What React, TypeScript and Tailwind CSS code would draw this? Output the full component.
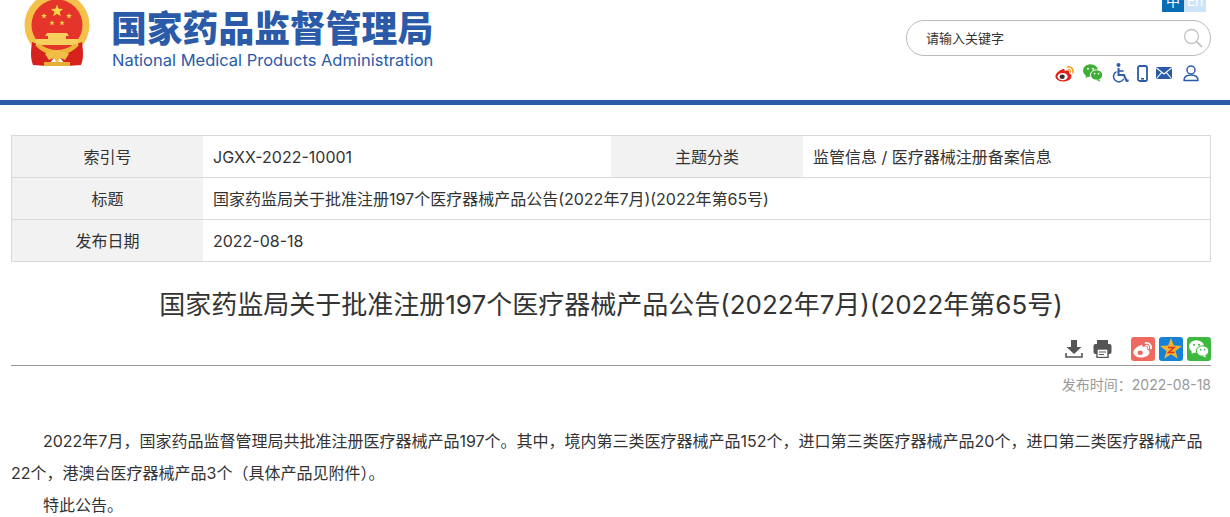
import React from "react";

const FONT = "font-['Inter','Noto_Sans_CJK_SC',sans-serif]";

function Star({ cx, cy, r, fill = "#f9d648" }: { cx: number; cy: number; r: number; fill?: string }) {
  const pts = Array.from({ length: 10 }, (_, i) => {
    const a = (-90 + i * 36) * (Math.PI / 180);
    const q = i % 2 === 0 ? r : r * 0.42;
    return `${(cx + q * Math.cos(a)).toFixed(2)},${(cy + q * Math.sin(a)).toFixed(2)}`;
  }).join(" ");
  return <polygon points={pts} fill={fill} />;
}

function Emblem() {
  return (
    <svg width="68" height="70" viewBox="0 0 68 70" className="block">
      <circle cx="34" cy="27" r="32.5" fill="#f4c24a" />
      <circle cx="34" cy="27" r="25.5" fill="#e5352b" />
      <path d="M9 44 C8 52 7 60 10 67 L24 68 L31 60 L24 50 Z" fill="#d7211c" />
      <path d="M59 44 C60 52 61 60 58 67 L44 68 L37 60 L44 50 Z" fill="#d7211c" />
      <Star cx={34} cy={13} r={6.5} />
      <Star cx={21} cy={18} r={3} />
      <Star cx={46} cy={18} r={3} />
      <Star cx={29} cy={25} r={2.8} />
      <Star cx={39} cy={25} r={2.8} />
      <path d="M24 35 L44 35 L46 38 L22 38 Z" fill="#f6d05e" />
      <rect x="25" y="38" width="18" height="3" fill="#f6d05e" />
      <rect x="13" y="41" width="42" height="6" fill="#f6d05e" />
      <path d="M12 47 C18 54 26 57 34 57 C42 57 50 54 56 47 L51 46 C46 50 40 52 34 52 C28 52 22 50 17 46 Z" fill="#eeb53a" />
      <path d="M22 56 C28 51 40 51 46 56 L42 62 L37 60 L34 66 L31 60 L26 62 Z" fill="#f0bd45" />
      <rect x="21" y="64" width="26" height="4" fill="#e9ae35" />
    </svg>
  );
}

function WeiboGlyph({ body = "#e2231a", arc = "#f5a623", eye = "#333" }: { body?: string; arc?: string; eye?: string }) {
  return (
    <svg width="20" height="17" viewBox="0 0 20 17" className="block">
      <path d="M8 4 C3.5 5.5 0 9 0.5 12 C1 15.3 5 16.5 8.5 16.5 C13 16.5 16.5 14 16.5 11.2 C16.5 9.6 15 8.9 14.2 8.6 C14.8 7 14.3 5.8 12.5 5.6 C11.4 5.5 10.2 6 9.6 6.3 C10 4.8 9.6 3.5 8 4 Z" fill={body} />
      <ellipse cx="7.6" cy="11.6" rx="5" ry="3.6" fill="#fff" />
      <ellipse cx="7.2" cy="11.8" rx="2.6" ry="2.2" fill={eye} />
      <path d="M12.5 2 C15.8 1.2 18.8 4 18 7.6" stroke={arc} strokeWidth="1.7" fill="none" strokeLinecap="round" />
      <path d="M13 4.6 C14.8 4.2 16 5.6 15.6 7.2" stroke={arc} strokeWidth="1.3" fill="none" strokeLinecap="round" />
    </svg>
  );
}

function WechatGlyph({ a = "#3fae35", b = "#3fae35", stroke = "#fff", eye = "#fff" }: { a?: string; b?: string; stroke?: string; eye?: string }) {
  return (
    <svg width="20" height="18" viewBox="0 0 20 18" className="block">
      <ellipse cx="7.5" cy="6.5" rx="7.5" ry="6.3" fill={a} />
      <path d="M3 10.5 L2.6 14 L6.4 12 Z" fill={a} />
      <ellipse cx="13.6" cy="11" rx="6.2" ry="5.2" fill={b} stroke={stroke} strokeWidth="1" />
      <path d="M16 15 L17.4 17.8 L13.6 16 Z" fill={b} />
      <circle cx="5" cy="4.8" r="1" fill={eye} />
      <circle cx="10" cy="4.8" r="1" fill={eye} />
      <circle cx="11.6" cy="9.6" r="0.85" fill={eye} />
      <circle cx="15.6" cy="9.6" r="0.85" fill={eye} />
    </svg>
  );
}

function TopIcons() {
  return (
    <div className="mt-[8px] flex items-center h-[18px] pl-[149px]">
      <WeiboGlyph />
      <span className="ml-[8px]"><WechatGlyph /></span>
      <svg className="ml-[9px]" width="17" height="20" viewBox="0 0 17 20">
        <circle cx="6.5" cy="2" r="2" fill="#2b5ba8" />
        <path d="M6.5 5 L6.5 12 L12 12 L14.6 18 L16.6 17.2" stroke="#2b5ba8" strokeWidth="2" fill="none" />
        <path d="M6.5 8 L11.5 8" stroke="#2b5ba8" strokeWidth="1.6" />
        <path d="M4.6 8.6 A5.4 5.4 0 1 0 11.8 15.8" stroke="#2b5ba8" strokeWidth="1.5" fill="none" />
      </svg>
      <svg className="ml-[8px]" width="11" height="17" viewBox="0 0 11 17">
        <rect x="1" y="1" width="9" height="15" rx="1.8" stroke="#2b5ba8" strokeWidth="1.8" fill="#fff" />
        <rect x="4" y="13" width="3" height="1.6" fill="#2b5ba8" />
      </svg>
      <svg className="ml-[8px]" width="16" height="12" viewBox="0 0 16 12">
        <rect width="16" height="12" rx="1" fill="#2b5ba8" />
        <path d="M0.5 1 L8 7 L15.5 1 M0.5 11.5 L5.8 5.4 M15.5 11.5 L10.2 5.4" stroke="#fff" strokeWidth="1.1" fill="none" />
      </svg>
      <svg className="ml-[11px]" width="16" height="17" viewBox="0 0 16 17">
        <circle cx="8" cy="5" r="4" stroke="#2b5ba8" strokeWidth="1.5" fill="none" />
        <path d="M1 15.4 C1 11.5 4 10 8 10 C12 10 15 11.5 15 15.4 L1 15.4 Z" stroke="#2b5ba8" strokeWidth="1.5" fill="none" strokeLinejoin="round" />
      </svg>
    </div>
  );
}

function Header() {
  return (
    <header className="h-[100px] flex relative">
      <div className="pl-[23px] -mt-[2px]"><Emblem /></div>
      <div className="ml-[20px]">
        <div className="mt-[6px] h-[40px] text-[35.8px] leading-[40px] font-extrabold text-[#2b5ba8] whitespace-nowrap font-['Noto_Sans_CJK_SC',sans-serif]">国家药品监督管理局</div>
        <div className="mt-[3px] pl-[1px] text-[16.5px] leading-[22px] text-[#2b5ba8] whitespace-nowrap font-['Inter','Noto_Sans',sans-serif]">National Medical Products Administration</div>
      </div>
      <div className="ml-auto mr-[19px] w-[305px] relative">
        <div className="absolute top-0 left-[256px] flex h-[12px] overflow-hidden text-[14px] leading-[2px] text-white">
          <span className="w-[22px] bg-[#0a6cb5] text-center">中</span>
          <span className="w-[22px] bg-[#cde4f7] text-center">En</span>
        </div>
        <div className="mt-[20px] h-[36px] rounded-full border border-[#bbbbbb] flex items-center pl-[19px] pr-[7px]">
          <span className="pt-[2px] text-[13px] text-[#333]">请输入关键字</span>
          <svg className="ml-auto" width="20" height="20" viewBox="0 0 20 20">
            <circle cx="8.5" cy="8.5" r="7" stroke="#c4c4c4" strokeWidth="1.4" fill="none" />
            <path d="M13.6 13.6 L19 19" stroke="#c4c4c4" strokeWidth="1.8" />
          </svg>
        </div>
        <TopIcons />
      </div>
    </header>
  );
}

function Label({ children }: { children: React.ReactNode }) {
  return <div className="bg-[#f2f2f2] flex items-center justify-center text-[16px] text-[#333]">{children}</div>;
}
function Value({ children, wide }: { children: React.ReactNode; wide?: boolean }) {
  return <div className={`bg-white flex items-center pl-[10px] text-[16px] text-[#333] whitespace-nowrap ${wide ? "col-span-3" : ""}`}>{children}</div>;
}
function Row({ children, last }: { children: React.ReactNode; last?: boolean }) {
  return (
    <div className={`grid grid-cols-[191px_408px_192px_1fr] ${last ? "h-[41px]" : "h-[42px] border-b border-[#d9d9d9]"}`}>{children}</div>
  );
}

function InfoTable() {
  return (
    <div className="ml-[11px] w-[1200px] mt-[30px] border border-[#d9d9d9]">
      <Row><Label>索引号</Label><Value>JGXX-2022-10001</Value><Label>主题分类</Label><Value>监管信息 / 医疗器械注册备案信息</Value></Row>
      <Row><Label>标题</Label><Value wide>国家药监局关于批准注册197个医疗器械产品公告(2022年7月)(2022年第65号)</Value></Row>
      <Row last><Label>发布日期</Label><Value wide>2022-08-18</Value></Row>
    </div>
  );
}

function ShareBar() {
  return (
    <div className="ml-[11px] w-[1200px] mt-[11px] h-[28px] border-b border-[#999] flex items-start justify-end">
      <svg className="mt-[1px]" width="18" height="19" viewBox="0 0 18 19">
        <path d="M6 1 H12 V8 H16.5 L9 15 L1.5 8 H6 Z" fill="#555" />
        <path d="M1 14 V18 H17 V14" stroke="#555" strokeWidth="1.6" fill="none" />
      </svg>
      <svg className="ml-[10px] mt-[1px]" width="19" height="19" viewBox="0 0 19 19">
        <path d="M4 1 H15 V6 H4 Z" fill="#555" />
        <rect x="0.5" y="5" width="18" height="10" rx="2" fill="#555" />
        <rect x="4" y="10" width="11" height="8.5" fill="#fff" stroke="#555" strokeWidth="1.4" />
        <path d="M6 13 H13 M6 15.5 H11" stroke="#555" strokeWidth="1" />
      </svg>
      <div className="ml-[19px] -mt-[1px] w-[24px] h-[24px] rounded-[3px] bg-[#f0695f] flex items-center justify-center">
        <WeiboGlyph body="#fff" arc="#fff" eye="#f0695f" />
      </div>
      <div className="ml-[4px] -mt-[1px] w-[24px] h-[24px] rounded-[3px] bg-[#1482d8] flex items-center justify-center">
        <svg width="22" height="22" viewBox="0 0 22 22">
          <Star cx={11} cy={11.5} r={11.5} fill="#f7b32a" />
          <path d="M8 9.5 H14 L8.5 14.5 H14.5" stroke="#d9352a" strokeWidth="1.5" fill="none" />
        </svg>
      </div>
      <div className="ml-[4px] -mt-[1px] w-[24px] h-[24px] rounded-[3px] bg-[#3db93f] flex items-center justify-center">
        <WechatGlyph a="#fff" b="#fff" stroke="#3db93f" eye="#3db93f" />
      </div>
    </div>
  );
}

export default function App() {
  return (
    <div className={`w-[1230px] h-[517px] overflow-hidden bg-white ${FONT}`}>
      <Header />
      <div className="h-[5px] bg-[#2b5ba8]" />
      <InfoTable />
      <h1 className="ml-[11px] w-[1200px] mt-[21px] h-[44px] text-center text-[26px] leading-[44px] font-normal text-[#333] whitespace-nowrap">
        国家药监局关于批准注册197个医疗器械产品公告(2022年7月)(2022年第65号)
      </h1>
      <ShareBar />
      <div className="ml-[11px] w-[1200px] mt-[9px] text-right text-[14px] leading-[20px] text-[#999]">发布时间：2022-08-18</div>
      <div className="ml-[11px] w-[1200px] mt-[30px] text-[16px] leading-[32px] text-[#333]">
        <p className="indent-[32px]">2022年7月，国家药品监督管理局共批准注册医疗器械产品197个。其中，境内第三类医疗器械产品152个，进口第三类医疗器械产品20个，进口第二类医疗器械产品22个，港澳台医疗器械产品3个（具体产品见附件）。</p>
        <p className="indent-[32px]">特此公告。</p>
      </div>
    </div>
  );
}
